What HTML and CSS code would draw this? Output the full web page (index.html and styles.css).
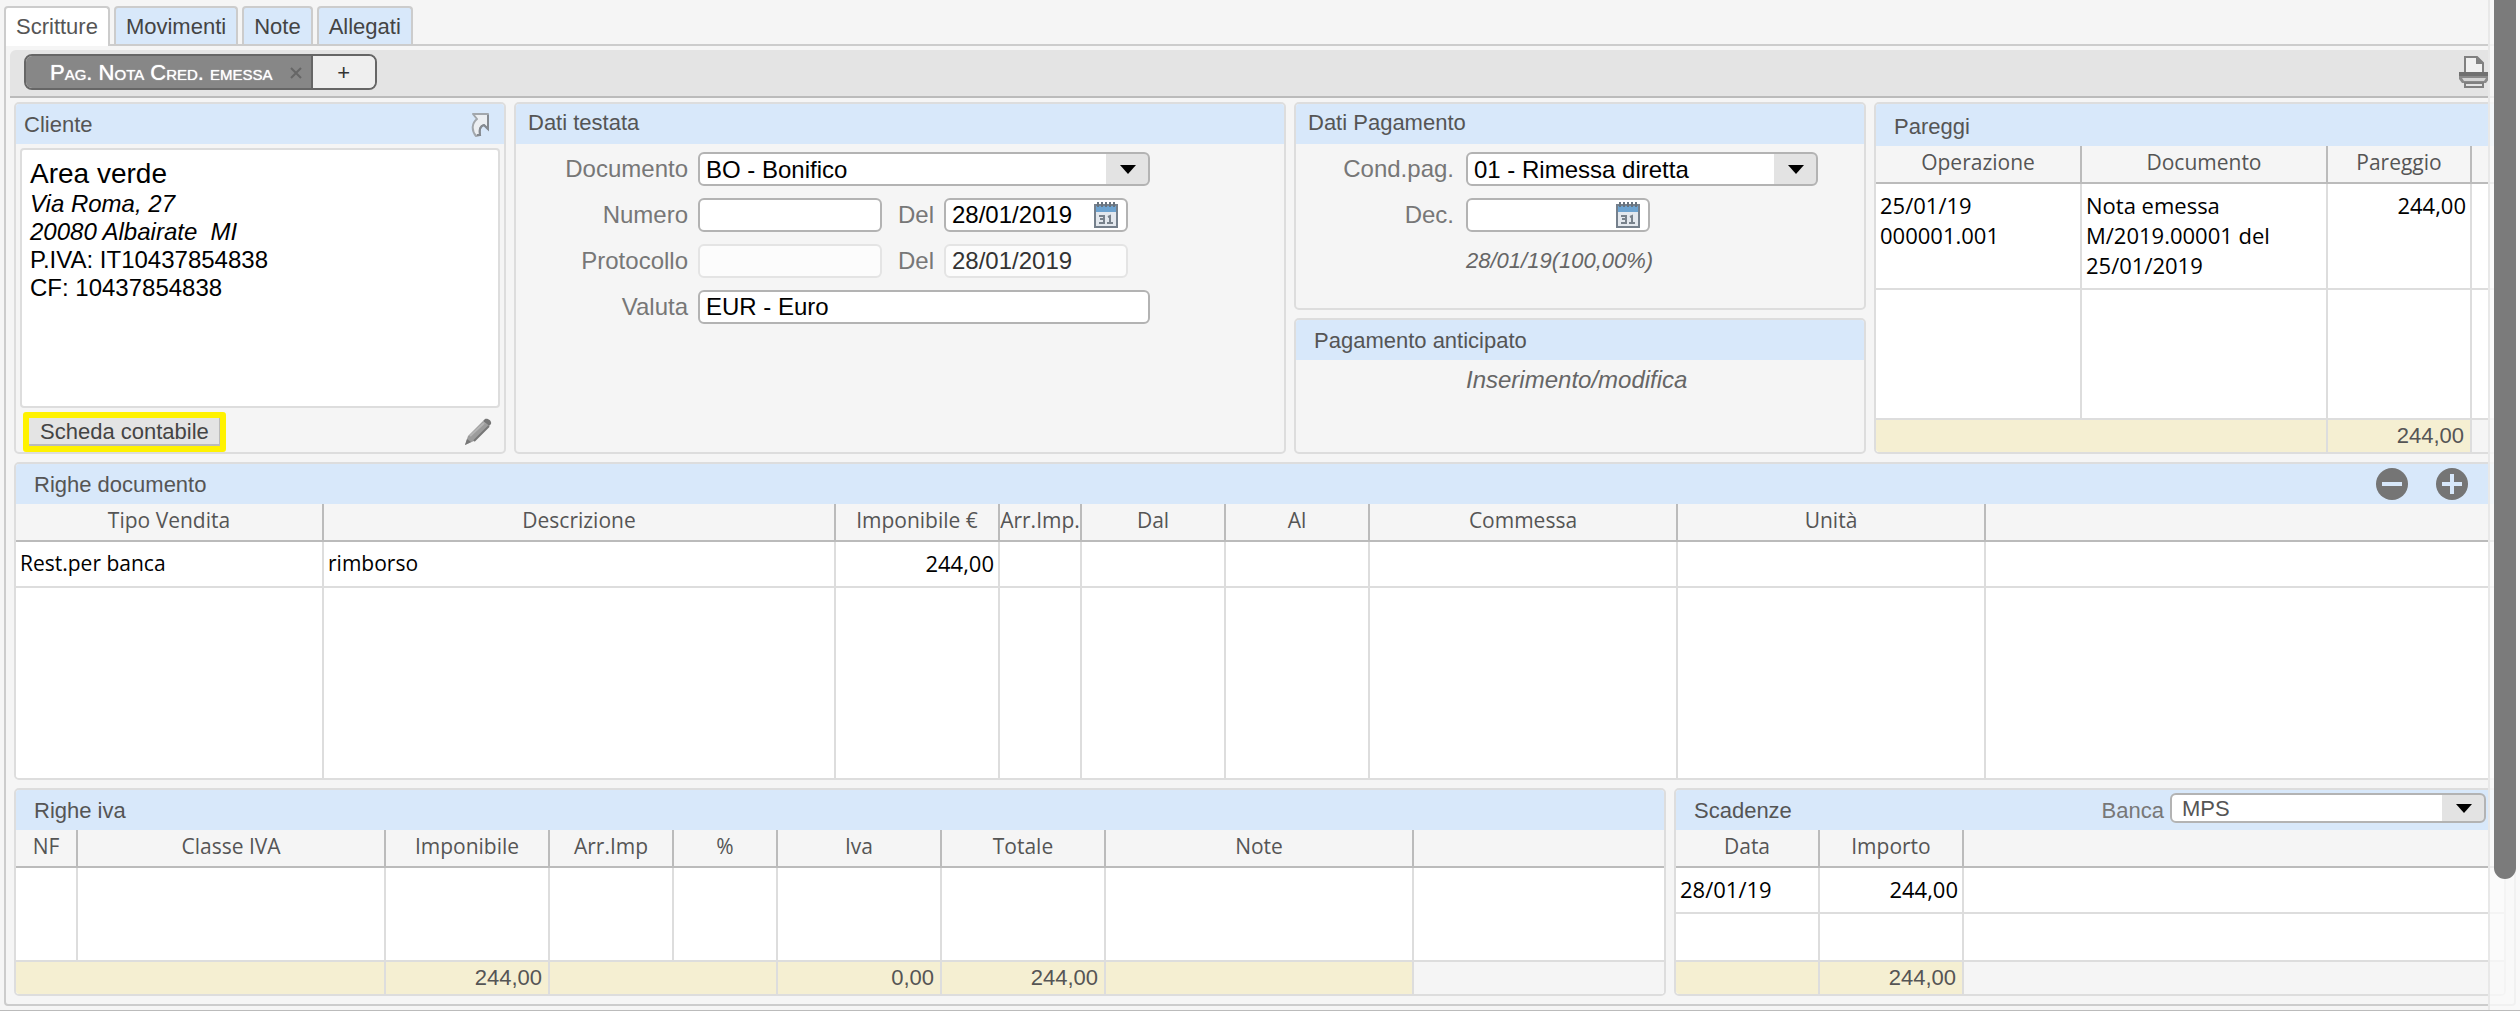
FILE: index.html
```html
<!DOCTYPE html>
<html lang="it">
<head>
    <meta charset="UTF-8">
    <meta name="viewport" content="width=device-width, initial-scale=1.0">
    <title>Scritture</title>
    <link rel="stylesheet" href="styles.css">
</head>
<body>
    <nav class="tabs">
        <a href="#scritture" class="tab active">Scritture</a>
        <a href="#movimenti" class="tab">Movimenti</a>
        <a href="#note" class="tab">Note</a>
        <a href="#allegati" class="tab">Allegati</a>
    </nav>

    <main class="frame" id="scritture">
        <div class="toolbar">
            <div class="segment">
                <div class="segment-item">
                    <span>Pag. Nota Cred. emessa</span>
                    <button class="close-btn" aria-label="Chiudi">
                        <svg width="14" height="14" viewBox="0 0 14 14"><path d="M2 2l10 10M12 2L2 12" stroke="#666" stroke-width="2" fill="none"/></svg>
                    </button>
                </div>
                <button class="add-btn">+</button>
            </div>
            <button class="icon-btn" aria-label="Stampa">
                <svg width="32" height="32" viewBox="0 0 32 32">
                    <path d="M7 17V1h12l6 6v10" fill="#f0f0f0" stroke="#808080" stroke-width="2"/>
                    <path d="M18 1v7h8z" fill="#808080"/>
                    <path d="M1 17h30v6l-3 4H4l-3-4z" fill="#8a8a8a"/>
                    <path d="M1 16h30v4H1z" fill="#707070"/>
                    <path d="M4 22h24l-2 3H6z" fill="#d4d4d4"/>
                    <path d="M7 27h18v4H7z" fill="#e4e4e4" stroke="#808080" stroke-width="2"/>
                </svg>
            </button>
        </div>

        <!-- Testata -->
        <div class="row row-top">
            <section class="panel">
                <h2 class="panel-title compact">
                    <span>Cliente</span>
                    <svg width="20" height="24" viewBox="0 0 20 24"><path d="M3 1h15v15l-4-4c-4 1-5 4-4 10l-4 1C1 17 2 10 7 6z" fill="#eceff2" stroke="#a2a7ac" stroke-width="2" stroke-linejoin="round"/><path d="M18 2v14l-4-4c-4 1-5 4-4 10H7" fill="none" stroke="#858a90" stroke-width="2"/></svg>
                </h2>
                <div class="address">
                    <div class="name">Area verde</div>
                    <i>Via Roma, 27<br>20080 Albairate&nbsp; MI</i><br>
                    P.IVA: IT10437854838<br>
                    CF: 10437854838
                </div>
                <div class="panel-actions">
                    <button class="scheda-btn">Scheda contabile</button>
                    <button class="icon-btn" aria-label="Modifica">
                        <svg width="28" height="28" viewBox="0 0 28 28"><path d="M1 27l3-9L19 3l6 5L10 23z" fill="#9c9c9c"/><path d="M19 3l2-2c3-1 7 2 6 5l-2 2z" fill="#777"/><path d="M10 23L25 8" fill="none" stroke="#777" stroke-width="2"/><path d="M6 18L20 5" fill="none" stroke="#b5b5b5" stroke-width="2"/><path d="M1 27l2-6 4 3z" fill="#777"/></svg>
                    </button>
                </div>
            </section>

            <section class="panel">
                <h2 class="panel-title medium">Dati testata</h2>
                <div class="form form-testata">
                    <label for="documento" class="first">Documento</label>
                    <select id="documento" class="field wide"><option>BO - Bonifico</option></select>

                    <label for="numero" class="first">Numero</label>
                    <input id="numero" class="field" type="text">
                    <label for="numero-del">Del</label>
                    <div class="field date">
                        <input id="numero-del" type="text" value="28/01/2019">
                        <button class="icon-btn" aria-label="Calendario">
                            <svg width="24" height="26" viewBox="0 0 24 26"><path d="M1 3h22v22H1z" fill="#e3e8ee" stroke="#75808c" stroke-width="2"/><path d="M2 4h20v6H2z" fill="#6da3d0"/><path d="M4 0v5M8 0v5M12 0v5M16 0v5M20 0v5" stroke="#68737e" stroke-width="2"/><path d="M5 14h5v7H5M6 17h4M14 15l2-1v8M13 21h6" fill="none" stroke="#78828c" stroke-width="2"/></svg>
                        </button>
                    </div>

                    <label for="protocollo" class="first">Protocollo</label>
                    <input id="protocollo" class="field" type="text" disabled>
                    <label for="protocollo-del">Del</label>
                    <input id="protocollo-del" class="field" type="text" value="28/01/2019" disabled>

                    <label for="valuta" class="first">Valuta</label>
                    <input id="valuta" class="field wide" type="text" value="EUR - Euro">
                </div>
            </section>

            <div class="stack">
                <section class="panel grow">
                    <h2 class="panel-title medium">Dati Pagamento</h2>
                    <div class="form form-pagamento">
                        <label for="condpag">Cond.pag.</label>
                        <select id="condpag" class="field wide-arrow"><option>01 - Rimessa diretta</option></select>
                        <label for="dec">Dec.</label>
                        <div class="field date short">
                            <input id="dec" type="text">
                            <button class="icon-btn" aria-label="Calendario">
                                <svg width="24" height="26" viewBox="0 0 24 26"><path d="M1 3h22v22H1z" fill="#e3e8ee" stroke="#75808c" stroke-width="2"/><path d="M2 4h20v6H2z" fill="#6da3d0"/><path d="M4 0v5M8 0v5M12 0v5M16 0v5M20 0v5" stroke="#68737e" stroke-width="2"/><path d="M5 14h5v7H5M6 17h4M14 15l2-1v8M13 21h6" fill="none" stroke="#78828c" stroke-width="2"/></svg>
                            </button>
                        </div>
                        <i class="note">28/01/19(100,00%)</i>
                    </div>
                </section>
                <section class="panel anticipato">
                    <h2 class="panel-title">Pagamento anticipato</h2>
                    <a href="#anticipato" class="edit-link">Inserimento/modifica</a>
                </section>
            </div>

            <section class="panel">
                <h2 class="panel-title tall">Pareggi</h2>
                <table class="grid pareggi">
                    <colgroup><col class="w206"><col class="w246"><col class="w144"><col></colgroup>
                    <thead>
                        <tr><th>Operazione</th><th>Documento</th><th>Pareggio</th><th></th></tr>
                    </thead>
                    <tbody>
                        <tr>
                            <td>25/01/19<br>000001.001</td>
                            <td>Nota emessa M/2019.00001 del 25/01/2019</td>
                            <td class="num">244,00</td>
                            <td></td>
                        </tr>
                        <tr class="filler"><td></td><td></td><td></td><td></td></tr>
                    </tbody>
                    <tfoot>
                        <tr><td colspan="2"></td><td>244,00</td><td class="blank"></td></tr>
                    </tfoot>
                </table>
            </section>
        </div>

        <!-- Righe documento -->
        <section class="panel">
            <h2 class="panel-title">
                <span>Righe documento</span>
                <span class="row-btns">
                    <button class="icon-btn" aria-label="Rimuovi riga">
                        <svg width="32" height="32" viewBox="0 0 32 32"><circle cx="16" cy="16" r="16" fill="#757575"/><path d="M6 14h20v4H6z" fill="#d8e8fa"/></svg>
                    </button>
                    <button class="icon-btn" aria-label="Aggiungi riga">
                        <svg width="32" height="32" viewBox="0 0 32 32"><circle cx="16" cy="16" r="16" fill="#757575"/><path d="M6 14h8V6h4v8h8v4h-8v8h-4v-8H6z" fill="#d8e8fa"/></svg>
                    </button>
                </span>
            </h2>
            <table class="grid righe">
                <colgroup><col class="w308"><col class="w512"><col class="w164"><col class="w82"><col class="w144"><col class="w144"><col class="w308"><col class="w308"><col></colgroup>
                <thead>
                    <tr><th>Tipo Vendita</th><th>Descrizione</th><th>Imponibile €</th><th>Arr.Imp.</th><th>Dal</th><th>Al</th><th>Commessa</th><th>Unità</th><th></th></tr>
                </thead>
                <tbody>
                    <tr><td>Rest.per banca</td><td>rimborso</td><td class="num">244,00</td><td></td><td></td><td></td><td></td><td></td><td></td></tr>
                    <tr class="filler"><td></td><td></td><td></td><td></td><td></td><td></td><td></td><td></td><td></td></tr>
                </tbody>
            </table>
        </section>

        <div class="row row-bottom">
            <section class="panel">
                <h2 class="panel-title">Righe iva</h2>
                <table class="grid iva">
                    <colgroup><col class="w62"><col class="w308"><col class="w164"><col class="w124"><col class="w104"><col class="w164"><col class="w164"><col class="w308"><col></colgroup>
                    <thead>
                        <tr><th>NF</th><th>Classe IVA</th><th>Imponibile</th><th>Arr.Imp</th><th>%</th><th>Iva</th><th>Totale</th><th>Note</th><th></th></tr>
                    </thead>
                    <tbody>
                        <tr class="filler"><td></td><td></td><td></td><td></td><td></td><td></td><td></td><td></td><td></td></tr>
                    </tbody>
                    <tfoot>
                        <tr><td colspan="2"></td><td>244,00</td><td colspan="2"></td><td>0,00</td><td>244,00</td><td></td><td class="blank"></td></tr>
                    </tfoot>
                </table>
            </section>

            <section class="panel">
                <h2 class="panel-title">
                    <span>Scadenze</span>
                    <span class="banca">
                        <label for="banca">Banca</label>
                        <select id="banca" class="field"><option>MPS</option></select>
                    </span>
                </h2>
                <table class="grid scadenze">
                    <colgroup><col class="w144"><col class="w144"><col></colgroup>
                    <thead>
                        <tr><th>Data</th><th>Importo</th><th></th></tr>
                    </thead>
                    <tbody>
                        <tr><td>28/01/19</td><td class="num">244,00</td><td></td></tr>
                        <tr class="filler"><td></td><td></td><td></td></tr>
                    </tbody>
                    <tfoot>
                        <tr><td></td><td>244,00</td><td class="blank"></td></tr>
                    </tfoot>
                </table>
            </section>
        </div>
    </main>

    <div class="scrollbar"><div class="thumb"></div></div>
</body>
</html>
```
FILE: styles.css
```css
* {
    box-sizing: border-box;
}
body {
    margin: 0;
    padding: 6px 4px 4px;
    position: relative;
    background-color: #f5f5f5;
    border-bottom: 1px solid #bbb;
    color: #555;
    font-family: "Liberation Sans", Arial, sans-serif;
    font-size: 22px;
}
button, input, select {
    font: inherit;
    color: inherit;
}
button {
    cursor: pointer;
}
svg {
    display: block;
}

/* tabs */
.tabs {
    display: flex;
    gap: 4px;
}
.tab {
    padding: 0 10px;
    line-height: 38px;
    border: 2px solid #ccc;
    border-bottom: none;
    border-radius: 4px 4px 0 0;
    background-color: #d8e8fa;
    color: #444;
    text-decoration: none;
    margin-bottom: -2px;
    height: 38px;
}
.tab.active {
    background-color: #fff;
    color: #555;
    height: 40px;
    z-index: 1;
}
.frame {
    display: flex;
    flex-direction: column;
    gap: 8px;
    padding: 4px 8px 8px;
    border: 2px solid #ccc;
    border-radius: 0 4px 4px 4px;
}

/* toolbar */
.toolbar {
    display: flex;
    align-items: center;
    justify-content: space-between;
    height: 48px;
    margin: 0 -4px -4px;
    padding: 0 20px 2px 14px;
    background-color: #e4e4e4;
    border-bottom: 2px solid #bbb;
    border-radius: 6px 6px 0 0;
}
.segment {
    display: flex;
    height: 36px;
    border: 2px solid #666;
    border-radius: 8px;
    overflow: hidden;
}
.segment-item {
    display: flex;
    align-items: center;
    gap: 16px;
    padding: 2px 8px 0 24px;
    background-color: #878787;
    color: #fff;
    font-variant: small-caps;
    text-shadow: 0 0 1px #fff;
}
.close-btn, .icon-btn {
    padding: 0;
    border: none;
    background: none;
}
.add-btn {
    width: 64px;
    padding: 2px 0 0;
    border: none;
    border-left: 2px solid #666;
    background-color: #efefef;
    color: #333;
}

/* panels */
.row {
    display: grid;
    gap: 8px;
}
.row-top {
    grid-template-columns: 492fr 772fr 572fr 632fr;
}
.row-bottom {
    grid-template-columns: 1652fr 832fr;
}
.stack {
    display: flex;
    flex-direction: column;
    gap: 8px;
}
.grow {
    flex: 1;
}
.panel {
    display: flex;
    flex-direction: column;
    min-width: 0;
    border: 2px solid #ddd;
    border-radius: 5px;
    overflow: hidden;
}
.panel-title {
    display: flex;
    align-items: center;
    justify-content: space-between;
    height: 40px;
    margin: 0;
    padding: 2px 18px 0;
    background-color: #d8e8fa;
    font-size: 22px;
    font-weight: normal;
}
.panel-title.compact {
    padding: 2px 14px 0 8px;
}
.panel-title.medium {
    padding: 0 12px 2px;
}
.panel-title.tall {
    height: 42px;
    padding-top: 4px;
}
.row-btns {
    display: flex;
    gap: 28px;
    padding: 0 18px 2px 0;
}
.banca {
    display: flex;
    align-items: center;
    gap: 6px;
    color: #777;
}
.banca .field {
    width: 316px;
    height: 30px;
    margin-bottom: 6px;
    padding-left: 10px;
    color: #555;
    font-size: 22px;
}

/* cliente */
.address {
    flex: 1;
    margin: 4px 4px 0;
    padding: 10px 8px;
    background-color: #fff;
    border: 2px solid #ddd;
    border-radius: 4px;
    color: #000;
    font-size: 24px;
    line-height: 28px;
}
.name {
    padding-bottom: 2px;
    font-size: 28px;
}
.panel-actions {
    display: flex;
    align-items: center;
    justify-content: space-between;
    padding: 4px 12px 0 7px;
}
.scheda-btn {
    height: 40px;
    padding: 0 11px;
    border: 6px solid #fff200;
    border-radius: 3px;
    background-color: #e4e4e4;
    box-shadow: inset -1px -2px #bbb;
    color: #444;
    line-height: 28px;
}

/* forms */
.form {
    display: grid;
    justify-content: start;
    align-items: center;
    row-gap: 12px;
    padding-top: 8px;
    color: #777;
    font-size: 24px;
}
.form label {
    text-align: right;
}
.form .first {
    grid-column: 1;
}
.form-testata {
    grid-template-columns: 172px 184px 42px 184px 12px;
    column-gap: 10px;
}
.form-pagamento {
    grid-template-columns: 158px 352px;
    column-gap: 12px;
}
.field {
    width: 100%;
    height: 34px;
    padding: 0 6px;
    border: 2px solid #b3b3b3;
    border-radius: 6px;
    background-color: #fff;
    color: #000;
    font-size: 24px;
}
.field.wide {
    grid-column: 2 / -1;
}
.field:disabled {
    background-color: #fcfcfc;
    border-color: #e4e4e4;
    color: #333;
}
select.field {
    appearance: none;
    background-image:
        url("data:image/svg+xml,%3Csvg xmlns='http://www.w3.org/2000/svg' width='16' height='9'%3E%3Cpath d='M0 0h16L8 9z'/%3E%3C/svg%3E"),
        linear-gradient(#e3e3e3, #e3e3e3);
    background-repeat: no-repeat;
    background-position: right 12px center, right center;
    background-size: 16px 9px, 42px 100%;
}
.date {
    display: flex;
    align-items: center;
    padding-right: 8px;
}
.date input {
    flex: 1;
    min-width: 0;
    padding: 0;
    border: none;
    background: none;
}
.date.short {
    width: 184px;
}
.note {
    grid-column: 2;
    line-height: 34px;
    color: #666;
    font-size: 22px;
}
.anticipato {
    height: 136px;
}
.edit-link {
    padding: 6px 0 0 170px;
    color: #666;
    font-size: 24px;
    font-style: italic;
    text-decoration: none;
}

/* tables */
.grid {
    width: 100%;
    table-layout: fixed;
    border-collapse: separate;
    border-spacing: 0;
    background-color: #fff;
    color: #000;
    font-family: "Open Sans", "Liberation Sans", sans-serif;
    font-size: 22px;
}
.grid th {
    padding: 0 0 4px;
    line-height: 32px;
    background-color: #f5f5f5;
    border-right: 2px solid #bbb;
    border-bottom: 2px solid #bbb;
    color: #555;
    font-size: 21px;
    font-weight: normal;
    white-space: nowrap;
    overflow: hidden;
}
.grid td {
    padding: 6px 4px 8px;
    line-height: 30px;
    vertical-align: top;
    border-right: 2px solid #ddd;
    border-bottom: 2px solid #ddd;
}
.grid td.num {
    text-align: right;
}
.grid th:last-child, .grid td:last-child {
    border-right: none;
}
.grid tfoot td {
    height: 32px;
    padding: 0 6px;
    line-height: 32px;
    background-color: #f5efd2;
    border-bottom: none;
    color: #555;
    font-family: "Liberation Sans", sans-serif;
    text-align: right;
}
.grid tfoot td.blank {
    background-color: #f5f5f5;
}
.pareggi .filler td {
    height: 130px;
}
.righe .filler td {
    height: 190px;
    border-bottom: none;
}
.righe td {
    font-size: 21px;
}
.righe td.num {
    font-size: 22px;
}
.iva .filler td {
    height: 94px;
}
.scadenze .filler td {
    height: 48px;
}
.w62 { width: 62px; }
.w82 { width: 82px; }
.w104 { width: 104px; }
.w124 { width: 124px; }
.w144 { width: 144px; }
.w164 { width: 164px; }
.w206 { width: 206px; }
.w246 { width: 246px; }
.w308 { width: 308px; }
.w512 { width: 512px; }

/* overlay scrollbar */
.scrollbar {
    position: absolute;
    top: 0;
    right: 0;
    bottom: 0;
    width: 32px;
    padding: 0 4px;
    background-color: rgba(250, 250, 250, 0.8);
    border-left: 2px solid #e8e8e8;
}
.thumb {
    height: 87%;
    width: 22px;
    background-color: #7b7b7b;
    border-radius: 0 0 11px 11px;
}
```
